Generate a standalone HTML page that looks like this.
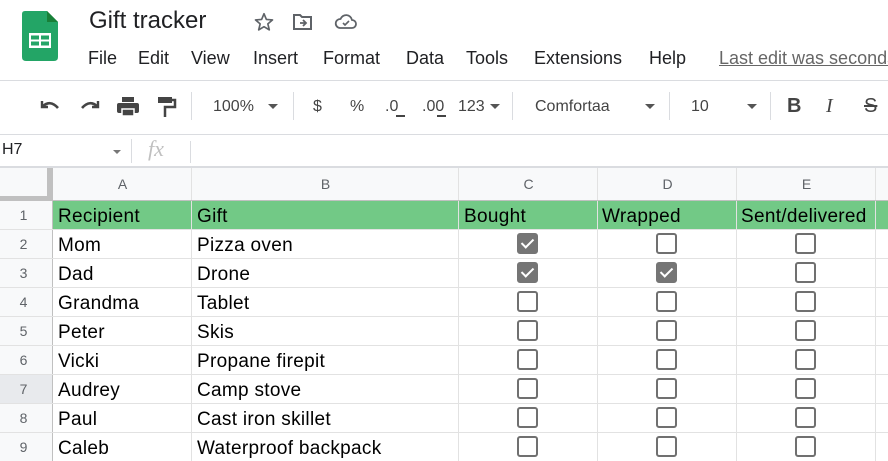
<!DOCTYPE html>
<html><head><meta charset="utf-8"><style>
*{margin:0;padding:0;box-sizing:border-box}
body{width:888px;height:461px;overflow:hidden;background:#fff;font-family:"Liberation Sans",Arial,sans-serif;position:relative;color:#202124}
.a{position:absolute;white-space:nowrap}
.menu{top:48px;font-size:18px;color:#202124}
.tb{top:98px;font-size:16px;color:#444}
.sep{position:absolute;top:92px;width:1px;height:28px;background:#dadce0}
.hl{position:absolute;background:#e1e1e1}
.cell{position:absolute;font-size:19px;color:#000;letter-spacing:0.3px}
.rn{position:absolute;left:0;width:47px;text-align:center;font-size:14px;color:#5f6368}
.ch{position:absolute;top:168px;height:33px;line-height:33px;text-align:center;font-size:14px;color:#5f6368}
.cb{position:absolute;width:21px;height:21px;border:2.5px solid #707070;border-radius:3px;background:#fff}
.cb.on{background:#757575;border-color:#757575}
.cb.on::after{content:"";position:absolute;left:5px;top:1px;width:5px;height:10px;border-right:2.5px solid #fff;border-bottom:2.5px solid #fff;transform:rotate(45deg)}
.arr{position:absolute;top:115px;width:9px;height:2px;background:#444}
</style></head><body>
<svg class="a" style="left:22px;top:11px" width="36" height="50" viewBox="0 0 36 50"><path d="M3 0H25L36 11V46Q36 50 32 50H4Q0 50 0 46V3Q0 0 3 0Z" fill="#23a566"/><path d="M25 0V11H36Z" fill="#188038"/><rect x="7" y="22" width="22" height="15" fill="#fff"/><rect x="9" y="24.5" width="8" height="4" fill="#23a566"/><rect x="19" y="24.5" width="8" height="4" fill="#23a566"/><rect x="9" y="30.5" width="8" height="4" fill="#23a566"/><rect x="19" y="30.5" width="8" height="4" fill="#23a566"/></svg>
<div class="a" style="left:89px;top:7px;font-size:24px;color:#202124">Gift tracker</div>
<svg class="a" style="left:253px;top:11px" width="22" height="22" viewBox="0 0 24 24"><path d="M12 3l2.6 6.2 6.7.5-5.1 4.4 1.6 6.5L12 17.1 6.2 20.6l1.6-6.5L2.7 9.7l6.7-.5z" fill="none" stroke="#5f6368" stroke-width="1.8" stroke-linejoin="round"/></svg>
<svg class="a" style="left:292px;top:12px" width="22" height="20" viewBox="0 0 22 20"><path d="M2 3h6l2 2h9v12H2z" fill="none" stroke="#5f6368" stroke-width="2"/><path d="M8 11h6M11 8l3 3-3 3" fill="none" stroke="#5f6368" stroke-width="1.8"/></svg>
<svg class="a" style="left:334px;top:12px" width="24" height="20" viewBox="0 0 24 20"><path d="M6 16h12a4 4 0 0 0 0-8 6 6 0 0 0-11.5-1A4.5 4.5 0 0 0 6 16z" fill="none" stroke="#5f6368" stroke-width="1.8"/><path d="M9 11l2 2 4-4" fill="none" stroke="#5f6368" stroke-width="1.6"/></svg>
<div class="a menu" style="left:88px">File</div>
<div class="a menu" style="left:138px">Edit</div>
<div class="a menu" style="left:191px">View</div>
<div class="a menu" style="left:253px">Insert</div>
<div class="a menu" style="left:323px">Format</div>
<div class="a menu" style="left:406px">Data</div>
<div class="a menu" style="left:466px">Tools</div>
<div class="a menu" style="left:534px">Extensions</div>
<div class="a menu" style="left:649px">Help</div>
<div class="a menu" style="left:719px;color:#666;text-decoration:underline">Last edit was seconds ago</div>
<div class="a" style="left:0;top:80px;width:888px;height:1px;background:#dadce0"></div>
<svg class="a" style="left:38px;top:97px" width="24" height="16" viewBox="0 0 24 16"><path d="M4 4v6h6" fill="none" stroke="#444" stroke-width="2.4"/><path d="M4 10Q12 2 20 11" fill="none" stroke="#444" stroke-width="2.6"/></svg>
<svg class="a" style="left:78px;top:97px" width="24" height="16" viewBox="0 0 24 16"><path d="M20 4v6h-6" fill="none" stroke="#444" stroke-width="2.4"/><path d="M20 10Q12 2 4 11" fill="none" stroke="#444" stroke-width="2.6"/></svg>
<svg class="a" style="left:116px;top:96px" width="24" height="22" viewBox="0 0 24 22"><rect x="6" y="1" width="12" height="5" fill="#444"/><rect x="1" y="7" width="22" height="10" rx="2" fill="#444"/><rect x="6" y="13" width="12" height="7" fill="#444" stroke="#fff" stroke-width="1.5"/></svg>
<svg class="a" style="left:157px;top:96px" width="20" height="22" viewBox="0 0 20 22"><rect x="1" y="1" width="14" height="6" fill="#444"/><path d="M15 4h3v7H8v10" fill="none" stroke="#444" stroke-width="2.5"/></svg>
<div class="sep" style="left:191px"></div>
<div class="a tb" style="left:213px">100%</div>
<div class="a" style="left:268px;top:104px;border:5px solid transparent;border-top:5px solid #555"></div>
<div class="sep" style="left:293px"></div>
<div class="a tb" style="left:313px">$</div>
<div class="a tb" style="left:350px">%</div>
<div class="a tb" style="left:385px">.0</div>
<div class="arr" style="left:396px"></div>
<div class="a tb" style="left:422px">.00</div>
<div class="arr" style="left:437px"></div>
<div class="a tb" style="left:458px">123</div>
<div class="a" style="left:490px;top:104px;border:5px solid transparent;border-top:5px solid #555"></div>
<div class="sep" style="left:512px"></div>
<div class="a tb" style="left:535px">Comfortaa</div>
<div class="a" style="left:645px;top:104px;border:5px solid transparent;border-top:5px solid #555"></div>
<div class="sep" style="left:669px"></div>
<div class="a tb" style="left:691px">10</div>
<div class="a" style="left:747px;top:104px;border:5px solid transparent;border-top:5px solid #555"></div>
<div class="sep" style="left:770px"></div>
<div class="a" style="left:787px;top:95px;font-size:20px;font-weight:bold;color:#444">B</div>
<div class="a" style="left:826px;top:95px;font-size:20px;font-style:italic;font-family:'Liberation Serif',serif;color:#444">I</div>
<div class="a" style="left:864px;top:95px;font-size:20px;text-decoration:line-through;color:#444">S</div>
<div class="a" style="left:0;top:134px;width:888px;height:1px;background:#dadce0"></div>
<div class="a" style="left:2px;top:141px;font-size:16px;color:#202124">H7</div>
<div class="a" style="left:113px;top:150px;border:4px solid transparent;border-top:4px solid #777"></div>
<div class="sep" style="left:131px;top:139px;height:24px"></div>
<div class="a" style="left:148px;top:136px;font-size:22px;font-style:italic;font-family:'Liberation Serif',serif;color:#c0c0c0">fx</div>
<div class="sep" style="left:190px;top:141px;height:22px"></div>
<div class="a" style="left:0;top:166px;width:888px;height:2px;background:#dadce0"></div>
<div class="a" style="left:0;top:168px;width:888px;height:33px;background:#f8f9fa"></div>
<div class="a" style="left:0;top:168px;width:53px;height:293px;background:#f8f9fa"></div>
<div class="hl" style="left:0;top:375px;width:53px;height:29px;background:#e8eaed"></div>
<div class="a" style="left:47px;top:168px;width:5px;height:29px;background:#c0c0c0"></div>
<div class="a" style="left:0;top:196px;width:52px;height:5px;background:#c0c0c0"></div>
<div class="ch" style="left:53px;width:139px">A</div>
<div class="ch" style="left:192px;width:267px">B</div>
<div class="ch" style="left:459px;width:139px">C</div>
<div class="ch" style="left:598px;width:139px">D</div>
<div class="ch" style="left:737px;width:139px">E</div>
<div class="a" style="left:53px;top:201px;width:835px;height:29px;background:#72c986"></div>
<div class="a" style="left:52px;top:168px;width:1px;height:293px;background:#c0c0c0"></div>
<div class="a" style="left:191px;top:168px;width:1px;height:293px;background:#e2e2e2"></div>
<div class="a" style="left:458px;top:168px;width:1px;height:293px;background:#e2e2e2"></div>
<div class="a" style="left:597px;top:168px;width:1px;height:293px;background:#e2e2e2"></div>
<div class="a" style="left:736px;top:168px;width:1px;height:293px;background:#e2e2e2"></div>
<div class="a" style="left:875px;top:168px;width:1px;height:293px;background:#e2e2e2"></div>
<div class="a" style="left:0;top:200px;width:888px;height:1px;background:#c0c0c0"></div>
<div class="a" style="left:0;top:229px;width:888px;height:1px;background:#e2e2e2"></div>
<div class="a" style="left:0;top:258px;width:888px;height:1px;background:#e2e2e2"></div>
<div class="a" style="left:0;top:287px;width:888px;height:1px;background:#e2e2e2"></div>
<div class="a" style="left:0;top:316px;width:888px;height:1px;background:#e2e2e2"></div>
<div class="a" style="left:0;top:345px;width:888px;height:1px;background:#e2e2e2"></div>
<div class="a" style="left:0;top:374px;width:888px;height:1px;background:#e2e2e2"></div>
<div class="a" style="left:0;top:403px;width:888px;height:1px;background:#e2e2e2"></div>
<div class="a" style="left:0;top:432px;width:888px;height:1px;background:#e2e2e2"></div>
<div class="rn" style="top:207px">1</div>
<div class="rn" style="top:236px">2</div>
<div class="rn" style="top:265px">3</div>
<div class="rn" style="top:294px">4</div>
<div class="rn" style="top:323px">5</div>
<div class="rn" style="top:352px">6</div>
<div class="rn" style="top:381px">7</div>
<div class="rn" style="top:410px">8</div>
<div class="rn" style="top:439px">9</div>
<div class="cell" style="left:58px;top:206px">Recipient</div>
<div class="cell" style="left:197px;top:206px">Gift</div>
<div class="cell" style="left:464px;top:206px">Bought</div>
<div class="cell" style="left:602px;top:206px">Wrapped</div>
<div class="cell" style="left:741px;top:206px">Sent/delivered</div>
<div class="cell" style="left:58px;top:235px">Mom</div><div class="cell" style="left:197px;top:235px">Pizza oven</div>
<div class="cell" style="left:58px;top:264px">Dad</div><div class="cell" style="left:197px;top:264px">Drone</div>
<div class="cell" style="left:58px;top:293px">Grandma</div><div class="cell" style="left:197px;top:293px">Tablet</div>
<div class="cell" style="left:58px;top:322px">Peter</div><div class="cell" style="left:197px;top:322px">Skis</div>
<div class="cell" style="left:58px;top:351px">Vicki</div><div class="cell" style="left:197px;top:351px">Propane firepit</div>
<div class="cell" style="left:58px;top:380px">Audrey</div><div class="cell" style="left:197px;top:380px">Camp stove</div>
<div class="cell" style="left:58px;top:409px">Paul</div><div class="cell" style="left:197px;top:409px">Cast iron skillet</div>
<div class="cell" style="left:58px;top:438px">Caleb</div><div class="cell" style="left:197px;top:438px">Waterproof backpack</div>
<div class="cb on" style="left:517px;top:233px"></div><div class="cb" style="left:656px;top:233px"></div><div class="cb" style="left:795px;top:233px"></div>
<div class="cb on" style="left:517px;top:262px"></div><div class="cb on" style="left:656px;top:262px"></div><div class="cb" style="left:795px;top:262px"></div>
<div class="cb" style="left:517px;top:291px"></div><div class="cb" style="left:656px;top:291px"></div><div class="cb" style="left:795px;top:291px"></div>
<div class="cb" style="left:517px;top:320px"></div><div class="cb" style="left:656px;top:320px"></div><div class="cb" style="left:795px;top:320px"></div>
<div class="cb" style="left:517px;top:349px"></div><div class="cb" style="left:656px;top:349px"></div><div class="cb" style="left:795px;top:349px"></div>
<div class="cb" style="left:517px;top:378px"></div><div class="cb" style="left:656px;top:378px"></div><div class="cb" style="left:795px;top:378px"></div>
<div class="cb" style="left:517px;top:407px"></div><div class="cb" style="left:656px;top:407px"></div><div class="cb" style="left:795px;top:407px"></div>
<div class="cb" style="left:517px;top:436px"></div><div class="cb" style="left:656px;top:436px"></div><div class="cb" style="left:795px;top:436px"></div>
</body></html>
